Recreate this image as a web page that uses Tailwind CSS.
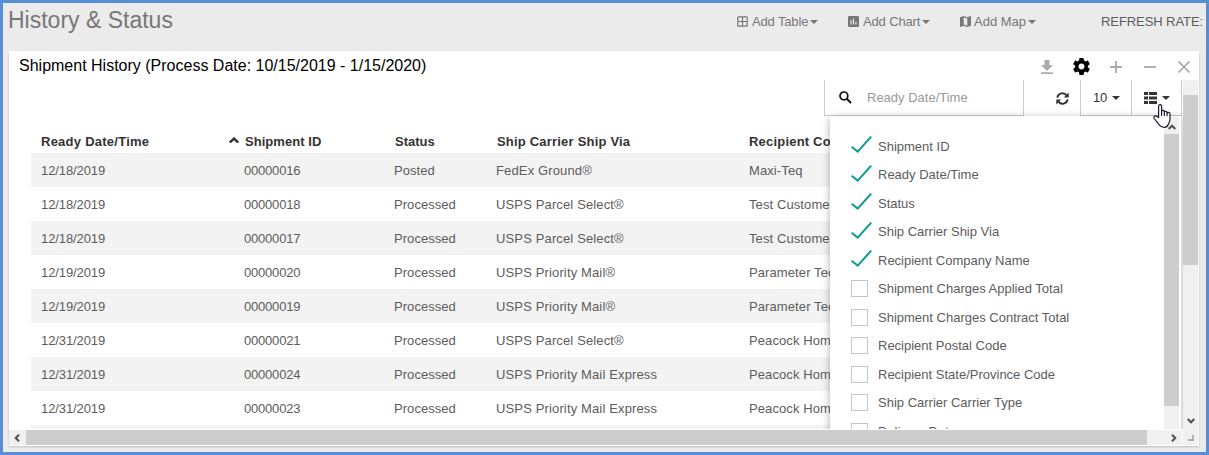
<!DOCTYPE html>
<html lang="en">
<head>
<meta charset="utf-8">
<title>History &amp; Status</title>
<script src="https://cdn.jsdelivr.net/npm/@tailwindcss/browser@4"></script>
</head>
<body>
<div class="relative w-[1209px] h-[455px] overflow-hidden border-3 border-[#568fd6] bg-[#ebebeb] font-['Liberation_Sans',Arial,sans-serif] text-[13px] text-[#5c5c5c] whitespace-nowrap flex flex-col">
  <!-- Page header -->
  <header class="h-12 shrink-0 flex">
    <h1 class="w-[734px] pl-[5px] pt-px text-[23px] leading-8 text-[#777]">History &amp; Status</h1>
    <div class="w-[111px] h-9 pt-px flex items-center tracking-[-0.15px] text-[#777]">
      <svg class="w-[11px] h-[11px] mr-1" viewBox="0 0 11 11" fill="none" stroke="#777" stroke-width="1.2"><rect x=".8" y=".8" width="9.4" height="9.4" rx=".8"/><path d="M5.5 1v9M1 5.5h9"/></svg>
      <span>Add Table</span><svg class="ml-[2px] w-2 h-1" viewBox="0 0 8 4" fill="#777"><path d="M0 0h8L4 4z"/></svg>
    </div>
    <div class="w-[112px] h-9 pt-px flex items-center tracking-[-0.15px] text-[#777]">
      <svg class="w-[11px] h-[11px] mr-1" viewBox="3 3 18 18" fill="#777"><path d="M19 3H5a2 2 0 0 0-2 2v14c0 1.1.9 2 2 2h14a2 2 0 0 0 2-2V5a2 2 0 0 0-2-2zM9 17H7v-7h2v7zm4 0h-2V7h2v10zm4 0h-2v-4h2v4z"/></svg>
      <span>Add Chart</span><svg class="ml-[2px] w-2 h-1" viewBox="0 0 8 4" fill="#777"><path d="M0 0h8L4 4z"/></svg>
    </div>
    <div class="w-[141px] h-9 pt-px flex items-center tracking-[0px] text-[#777]">
      <svg class="w-[11px] h-[11px] mr-[3px]" viewBox="3 3 18 18" fill="#777"><path d="M20.5 3l-.16.03L15 5.1 9 3 3.360 4.900c-.21.07-.36.25-.36.48V20.500c0 .28.22.5.5.5l.16-.03L9 18.900l6 2.100 5.640-1.900c.21-.07.36-.25.36-.48V3.500c0-.28-.22-.5-.5-.5zM15 19l-6-2.110V5l6 2.110V19z"/></svg>
      <span>Add Map</span><svg class="ml-[2px] w-2 h-1" viewBox="0 0 8 4" fill="#777"><path d="M0 0h8L4 4z"/></svg>
    </div>
    <div class="h-9 pt-px flex items-center tracking-[-0.08px]">REFRESH RATE:</div>
  </header>

  <!-- Widget -->
  <section class="ml-1.5 w-[1190px] h-[395px] bg-white shadow-[0_1px_2px_rgba(0,0,0,0.2)] flex flex-col">
    <div class="h-[29px] flex items-center justify-between pl-2.5 pr-[9px]">
      <h2 class="text-[16px] text-black">Shipment History (Process Date: 10/15/2019 - 1/15/2020)</h2>
      <div class="flex items-center pt-[2px]">
        <svg class="w-[12px] h-[14px] mr-[20px]" viewBox="0 0 12 14" fill="#aaa"><path d="M3.500 0h5v5H12L6 11 0 5h3.500zM0 12.300h12V14H0z"/></svg>
        <svg class="w-[17px] h-[17px] mr-[20px]" viewBox="2 2 20 20" fill="#000"><path d="M19.430 12.980c.04-.32.07-.64.07-.98s-.03-.66-.07-.98l2.110-1.650c.19-.15.24-.42.12-.64l-2-3.460c-.12-.22-.39-.3-.61-.22l-2.490 1c-.52-.4-1.080-.73-1.690-.98l-.38-2.650A.488.488 0 0 0 14 2h-4c-.25 0-.46.18-.49.42l-.38 2.650c-.61.25-1.170.59-1.690.98l-2.490-1c-.23-.09-.49 0-.61.22l-2 3.460c-.13.22-.07.49.12.64l2.110 1.650c-.04.32-.07.65-.07.98s.03.66.07.98l-2.110 1.650c-.19.15-.24.42-.12.64l2 3.460c.12.22.39.3.61.22l2.490-1c.52.4 1.080.73 1.690.98l.38 2.650c.03.24.24.42.49.42h4c.25 0 .46-.18.49-.42l.38-2.650c.61-.25 1.170-.59 1.690-.98l2.490 1c.23.09.49 0 .61-.22l2-3.460c.12-.22.07-.49-.12-.64l-2.110-1.650zM12 15.500c-1.930 0-3.500-1.570-3.500-3.500s1.570-3.500 3.500-3.500 3.500 1.570 3.500 3.500-1.570 3.500-3.500 3.500z"/></svg>
        <svg class="w-[12px] h-[12px] mr-[22px]" viewBox="0 0 12 12" stroke="#aaa" stroke-width="1.800"><path d="M6 0v12M0 6h12"/></svg>
        <svg class="w-[12px] h-[12px] mr-[22px]" viewBox="0 0 12 12" stroke="#aaa" stroke-width="1.800"><path d="M0 6h12"/></svg>
        <svg class="w-[12px] h-[12px]" viewBox="0 0 12 12" stroke="#aaa" stroke-width="1.600"><path d="M.5.5l11 11M11.500.5l-11 11"/></svg>
      </div>
    </div>

    <div class="h-[350px] flex">
      <div class="relative w-[1174px] h-[349px] overflow-hidden">
        <!-- Toolbar -->
        <div class="flex h-9 pl-[815px] text-[#333]">
          <div class="w-[200px] border-x border-b border-[#ccc] flex items-center pl-[14px]">
            <svg class="w-[13px] h-[13px] mr-[15px]" viewBox="0 0 13 13" fill="none" stroke="#111"><circle cx="4.900" cy="4.900" r="3.900" stroke-width="1.700"/><path d="M7.800 7.800l4.200 4.200" stroke-width="2"/></svg>
            <span class="text-[#999]">Ready Date/Time</span>
          </div>
          <div class="w-14 flex items-center pl-[32px]">
            <svg class="w-[13px] h-[13px]" viewBox="0 0 13 13" fill="none" stroke="#333" stroke-width="1.900"><path d="M1.300 5.600A5.200 5.200 0 0 1 10.600 3.400M11.700 7.400A5.200 5.200 0 0 1 2.400 9.600"/><path d="M12.700.6v4.900H7.800zM.3 12.400V7.500h4.900z" fill="#333" stroke="none"/></svg>
          </div>
          <div class="w-[52px] border-x border-b border-[#ccc] flex items-center pl-3">
            <span class="tracking-[-0.3px]">10</span><svg class="ml-[5px] w-2 h-1" viewBox="0 0 8 4" fill="#333"><path d="M0 0h8L4 4z"/></svg>
          </div>
          <div class="w-[50px] border-r border-b border-[#ccc] flex items-center pl-3">
            <svg class="w-[13px] h-[12px]" viewBox="0 0 13 12" fill="#333"><path d="M0 0h4v3H0zM5 0h8v3H5zM0 4.500h4v3H0zM5 4.500h8v3H5zM0 9h4v3H0zM5 9h8v3H5z"/></svg><svg class="ml-[5px] w-2 h-1" viewBox="0 0 8 4" fill="#333"><path d="M0 0h8L4 4z"/></svg>
          </div>
        </div>

        <!-- Shipments -->
        <div class="ml-[22px] w-[1130px]">
          <div class="h-[37px] pt-[18px] grid grid-cols-[203px_150px_102px_253px_1fr] items-start pl-[10px] font-bold text-[#333] leading-[15px] tracking-[0.15px]">
            <div class="flex justify-between items-center pr-[5px] tracking-[0.25px]"><span>Ready Date/Time</span><svg class="w-[10px] h-[6px] -mt-[3px]" viewBox="0 0 10 6" fill="none" stroke="#333" stroke-width="2.400"><path d="M.8 5.500L5 1.600 9.200 5.500"/></svg></div>
            <div class="pl-px tracking-[0.05px]">Shipment ID</div><div class="pl-px tracking-[0px]">Status</div><div class="pl-px tracking-[0.2px]">Ship Carrier Ship Via</div><div class="tracking-[0.2px]">Recipient Company Name</div>
          </div>
          <div id="rows"></div>
        </div>

        <!-- Column chooser -->
        <div class="absolute left-[821px] top-[36px] w-[352px] h-[340px] bg-white border-r border-[#ddd] shadow-[0_2px_8px_rgba(0,0,0,0.32)] flex justify-between">
          <div id="columns" class="pl-[21px] pt-[16px]"></div>
          <div class="mt-px mr-[2px] w-[15px] h-[330px] bg-[#f0f0f0] flex flex-col items-center">
            <svg class="mt-[7px] w-[8px] h-[6px] shrink-0" viewBox="0 0 8 6" fill="none" stroke="#505050" stroke-width="2"><path d="M.7 5L4 1.700 7.300 5"/></svg>
            <div class="mt-[4px] w-[15px] h-[272px] shrink-0 bg-[#cdcdcd]"></div>
          </div>
        </div>

        <!-- Pointer -->
        <svg class="absolute left-[1144px] top-[24px] w-[18px] h-[24px]" viewBox="0 0 18 24" fill="#fff" stroke="#1c1c2e" stroke-width="1.200" stroke-linejoin="round" stroke-linecap="round"><path d="M5.600 13.500V2.200C5.600.2 8.600.2 8.600 2.200V7.300C9.300 5.900 11.300 6.300 11.400 7.800 12.300 6.800 14 7.300 14.100 8.700 15.300 7.900 17 8.600 17 10.200V15.500C17 17.500 15.500 19.500 15.200 20.500 14.500 22.800 13.500 23.300 11.300 23.300 7.500 23.300 6.300 21.600 5 19.300L1.200 14.500C.2 12.800 1.800 11.400 3.300 12.100z"/><path d="M8.600 7.300v4M11.400 7.800v3.700M14.100 8.700v3" fill="none"/></svg>
      </div>
      <!-- Vertical scrollbar -->
      <div class="w-[15px] bg-[#f0f0f0] flex flex-col items-center justify-between pt-[15px] pb-[6px]">
        <div class="w-[15px] h-[170px] bg-[#cdcdcd]"></div>
        <svg class="w-[8px] h-[6px]" viewBox="0 0 8 6" fill="none" stroke="#505050" stroke-width="2"><path d="M.7 1L4 4.300 7.300 1"/></svg>
      </div>
    </div>

    <!-- Horizontal scrollbar -->
    <div class="h-[15px] flex">
      <div class="w-[1173px] bg-[#f0f0f0] flex items-center justify-between pl-[5px] pr-[5px]">
        <svg class="w-[6px] h-[8px]" viewBox="0 0 6 8" fill="none" stroke="#505050" stroke-width="2"><path d="M5 .7L1.700 4 5 7.300"/></svg>
        <div class="ml-[6px] mr-auto w-[1121px] h-[15px] bg-[#cdcdcd]"></div>
        <svg class="w-[6px] h-[8px]" viewBox="0 0 6 8" fill="none" stroke="#505050" stroke-width="2"><path d="M1 .7L4.300 4 1 7.300"/></svg>
      </div>
      <div class="ml-px w-[15px] bg-[#f0f0f0] flex items-center justify-center">
        <svg class="w-[6px] h-[6px]" viewBox="0 0 6 6" fill="#b0b0b0"><path d="M4 0h2v6H0V4h4z"/></svg>
      </div>
    </div>
  </section>
</div>
<script>
const rows = [
  ['12/18/2019','00000016','Posted','FedEx Ground®','Maxi-Teq'],
  ['12/18/2019','00000018','Processed','USPS Parcel Select®','Test Customer'],
  ['12/18/2019','00000017','Processed','USPS Parcel Select®','Test Customer'],
  ['12/19/2019','00000020','Processed','USPS Priority Mail®','Parameter Tech'],
  ['12/19/2019','00000019','Processed','USPS Priority Mail®','Parameter Tech'],
  ['12/31/2019','00000021','Processed','USPS Parcel Select®','Peacock Home'],
  ['12/31/2019','00000024','Processed','USPS Priority Mail Express','Peacock Home'],
  ['12/31/2019','00000023','Processed','USPS Priority Mail Express','Peacock Home'],
  ['','','','','']
];
const fit = ['tracking-[-0.1px]','tracking-[-0.2px]','tracking-[0.05px]','tracking-[0.14px]','tracking-[0.1px]'];
document.getElementById('rows').innerHTML = rows.map(r =>
  `<div class="h-[34px] pt-[2px] grid grid-cols-[203px_150px_102px_253px_1fr] items-center pl-[10px] odd:bg-[#f3f3f3]">${r.map((c, i) => `<div class="${fit[i]}">${c}</div>`).join('')}</div>`).join('');
const columns = ['Shipment ID','Ready Date/Time','Status','Ship Carrier Ship Via','Recipient Company Name','Shipment Charges Applied Total','Shipment Charges Contract Total','Recipient Postal Code','Recipient State/Province Code','Ship Carrier Carrier Type','Delivery Date'];
const tick = '<svg class="w-[21px] h-[17px] mr-[6px] mb-[3px]" viewBox="0 0 21 17" fill="none" stroke="#0e9c8e" stroke-width="2"><path d="M.6 10.800L6.700 15.600 20.200.6"/></svg>';
const box = '<span class="w-[17px] h-[17px] mr-[10px] border border-[#c4c4c4]"></span>';
document.getElementById('columns').innerHTML = columns.map((c, i) =>
  `<div class="h-[28.5px] flex items-center">${i < 5 ? tick : box}<span>${c}</span></div>`).join('');
</script>
</body>
</html>
